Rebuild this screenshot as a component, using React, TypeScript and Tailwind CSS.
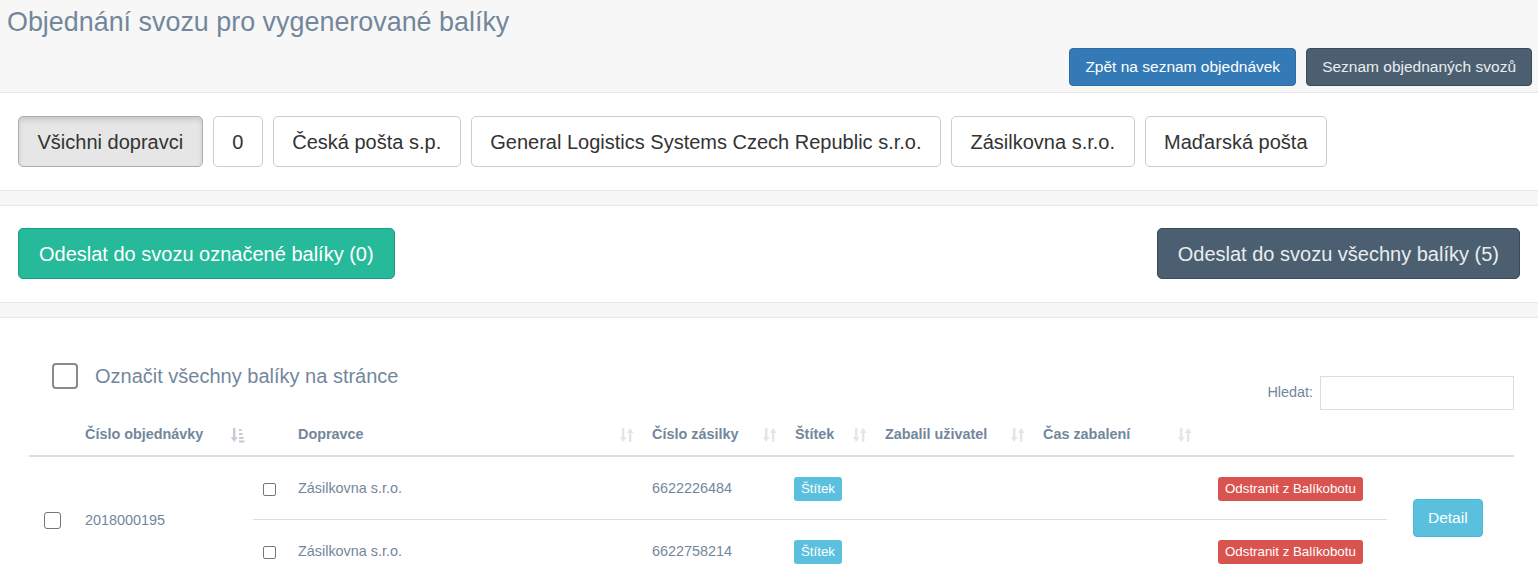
import React from "react";

const carriers = [
	"Všichni dopravci",
	"0",
	"Česká pošta s.p.",
	"General Logistics Systems Czech Republic s.r.o.",
	"Zásilkovna s.r.o.",
	"Maďarská pošta",
];

const packages = [
	{ carrier: "Zásilkovna s.r.o.", number: "6622226484" },
	{ carrier: "Zásilkovna s.r.o.", number: "6622758214" },
];

function SortBoth() {
	return (
		<svg width="15" height="16" viewBox="0 0 15 16" className="shrink-0">
			<g fill="#e2e6eb">
				<rect x="3" y="1" width="2.4" height="10" />
				<polygon points="0.8,10 7.6,10 4.2,15" />
				<rect x="10" y="5" width="2.4" height="10" />
				<polygon points="7.8,6 14.6,6 11.2,1" />
			</g>
		</svg>
	);
}

function SortAsc() {
	return (
		<svg width="15" height="16" viewBox="0 0 15 16" className="shrink-0">
			<g fill="#c3ccd6">
				<rect x="3" y="1" width="2.4" height="10" />
				<polygon points="0.8,10 7.6,10 4.2,15" />
				<rect x="9" y="2" width="2.5" height="2" />
				<rect x="9" y="6" width="3.5" height="2" />
				<rect x="9" y="10" width="4.5" height="2" />
				<rect x="9" y="13.5" width="5.5" height="2" />
			</g>
		</svg>
	);
}

function HeadCell({ label, width, asc, pr = "pr-[10px]" }: { label: string; width: string; asc?: boolean; pr?: string }) {
	return (
		<div className={`${width} shrink-0 flex items-center justify-between pl-[8px] ${pr}`}>
			<span>{label}</span>
			{asc ? <SortAsc /> : <SortBoth />}
		</div>
	);
}

export default function App() {
	return (
		<div
			className="min-h-[568px] bg-[#f7f7f7] text-[#73879c] text-[14.4px]"
			style={{ fontFamily: '"Liberation Sans", Arial, sans-serif' }}>
			{/* Page header */}
			<div className="h-[93px] border-b border-[#e6e6e6]">
				<h3 className="pl-[7px] pt-[6px] text-[26.9px] leading-[32px] font-normal">
					Objednání svozu pro vygenerované balíky
				</h3>
				<div className="flex justify-end gap-[10px] pr-[6px] mt-[10px]">
					<button className="h-[38px] px-[15px] rounded-[4px] border border-[#2e6da4] bg-[#337ab7] text-white text-[15.5px]">
						Zpět na seznam objednávek
					</button>
					<button className="h-[38px] px-[15px] rounded-[4px] border border-[#364b5f] bg-[#4b5f71] text-[#e9edef] text-[15.5px]">
						Seznam objednaných svozů
					</button>
				</div>
			</div>

			{/* Carrier filter */}
			<div className="bg-white border-b border-[#e6e6e6] pt-[23px] pb-[23px] pl-[18px] flex gap-[10px]">
				{carriers.map((c, i) => (
					<button
						key={c}
						className={`h-[51px] px-[18.5px] rounded-[5px] border text-[20px] text-[#333] ${
							i === 0
								? "bg-[#e6e6e6] border-[#adadad] shadow-[inset_0_3px_5px_rgba(0,0,0,0.125)]"
								: "bg-white border-[#ccc]"
						}`}>
						{c}
					</button>
				))}
			</div>

			{/* Send buttons */}
			<div className="mt-[14px] bg-white border-y border-[#e6e6e6] pt-[22px] pb-[23px] pl-[18px] pr-[18px] flex justify-between">
				<button className="h-[51px] px-[20px] rounded-[5px] border border-[#169f85] bg-[#26b99a] text-white text-[20px]">
					Odeslat do svozu označené balíky (0)
				</button>
				<button className="h-[51px] px-[20px] rounded-[5px] border border-[#364b5f] bg-[#4b5f71] text-[#e9edef] text-[20px]">
					Odeslat do svozu všechny balíky (5)
				</button>
			</div>

			{/* Package table */}
			<div className="mt-[14px] bg-white border-t border-[#e6e6e6] pl-[29px] pr-[24px] pt-[43px] pb-[20px]">
				<div className="flex justify-between items-start h-[54px]">
					<label className="flex items-center ml-[23px] gap-[17px] text-[20px]">
						<span className="w-[26px] h-[26px] rounded-[4px] border-2 border-[#8a8a8a] bg-white" />
						<span>Označit všechny balíky na stránce</span>
					</label>
					<div className="flex items-center gap-[7px] mt-[15px]">
						<span>Hledat:</span>
						<input className="w-[194px] h-[34px] border border-[#ddd] bg-white outline-none" />
					</div>
				</div>

				{/* Head */}
				<div className="flex h-[42px] items-center border-b-2 border-[#dddddd] font-bold">
					<div className="w-[48px] shrink-0" />
					<HeadCell label="Číslo objednávky" width="w-[176px]" asc pr="pr-[8px]" />
					<div className="w-[37px] shrink-0" />
					<HeadCell label="Dopravce" width="w-[354px]" />
					<HeadCell label="Číslo zásilky" width="w-[143px]" />
					<HeadCell label="Štítek" width="w-[90px]" />
					<HeadCell label="Zabalil uživatel" width="w-[158px]" />
					<HeadCell label="Čas zabalení" width="w-[167px]" />
				</div>

				{/* Body */}
				<div className="flex items-center">
					<div className="w-[48px] shrink-0 pl-[15px] pt-[2px] flex items-center">
						<span className="w-[17px] h-[17px] rounded-[3px] border border-[#767676] bg-white" />
					</div>
					<div className="w-[176px] shrink-0 pl-[8px] pt-[2px]">2018000195</div>
					<div className="w-[1134px] shrink-0">
						{packages.map((p, i) => (
							<div
								key={p.number}
								className={`flex items-center pt-[2px] ${i === 0 ? "h-[63px] border-b border-[#ddd]" : "h-[62px]"}`}>
								<div className="w-[37px] shrink-0 pl-[10px] flex items-center">
									<span className="w-[13px] h-[13px] rounded-[2px] border border-[#767676] bg-white" />
								</div>
								<div className="w-[354px] shrink-0 pl-[8px]">{p.carrier}</div>
								<div className="w-[143px] shrink-0 pl-[8px]">{p.number}</div>
								<div className="w-[90px] shrink-0 pl-[7px]">
									<span className="inline-block h-[24px] leading-[24px] px-[7px] rounded-[3px] bg-[#5bc0de] text-white text-[13.3px]">
										Štítek
									</span>
								</div>
								<div className="w-[158px] shrink-0" />
								<div className="w-[175px] shrink-0" />
								<div className="pl-[8px]">
									<span className="inline-block h-[24px] leading-[24px] px-[7px] rounded-[3px] bg-[#d9534f] text-white text-[13.3px]">
										Odstranit z Balíkobotu
									</span>
								</div>
							</div>
						))}
					</div>
					<div className="pl-[26px] pb-[4px]">
						<button className="h-[38px] px-[14px] rounded-[4px] border border-[#46b8da] bg-[#5bc0de] text-white text-[15.5px]">
							Detail
						</button>
					</div>
				</div>
			</div>
		</div>
	);
}
